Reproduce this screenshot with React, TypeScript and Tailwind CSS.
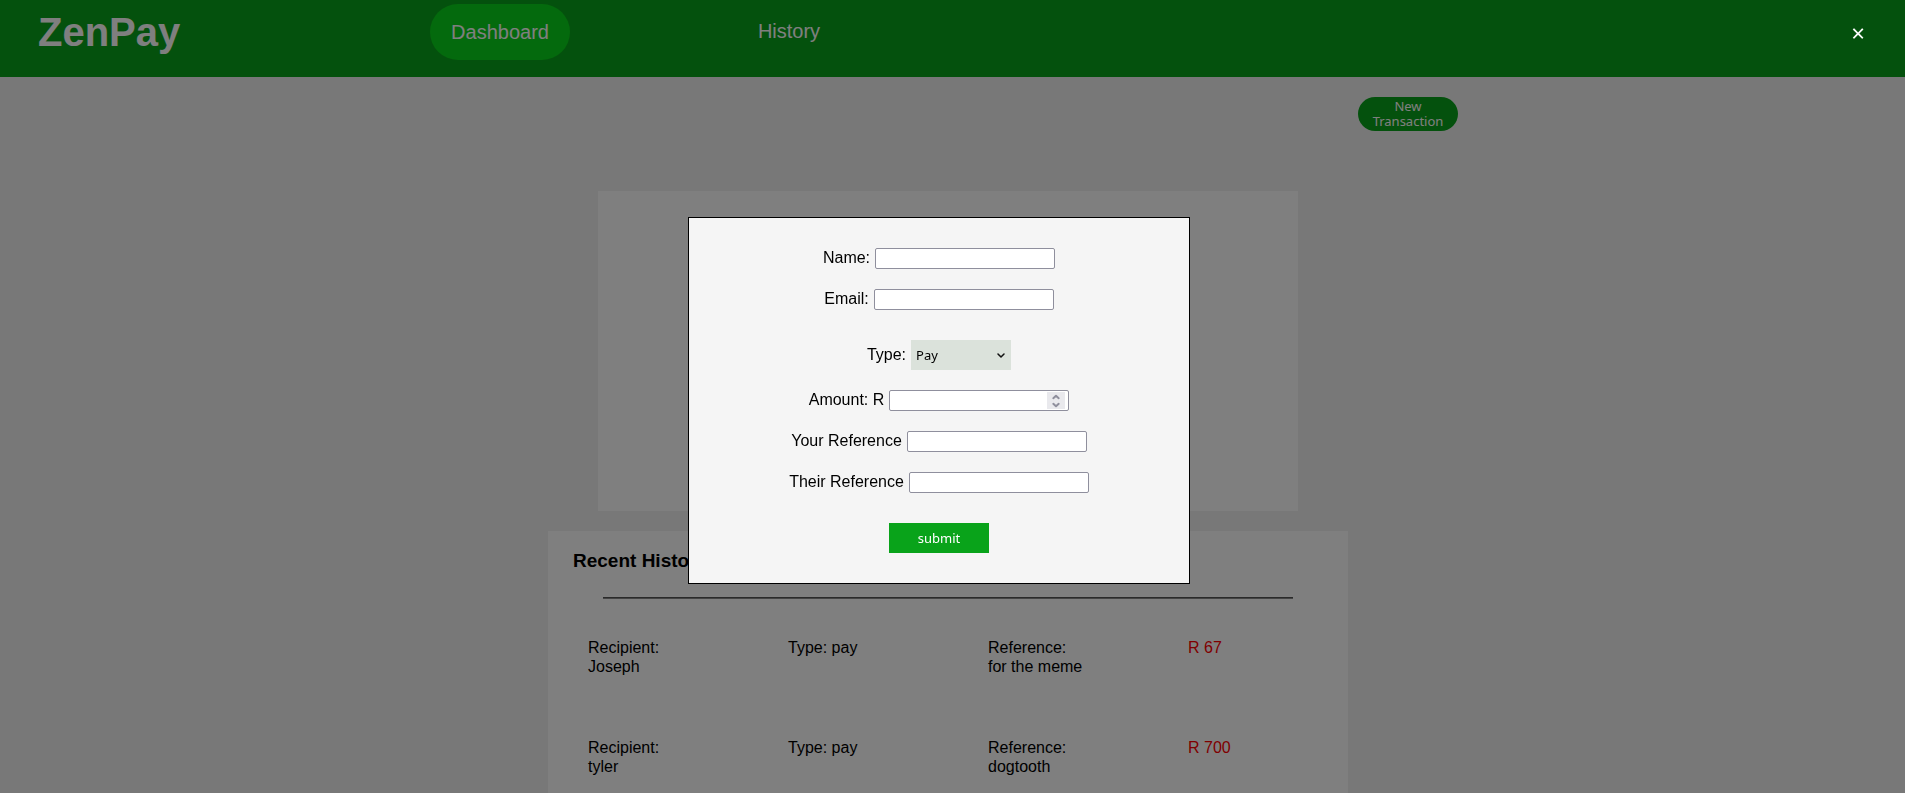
import { useId, useState } from "react";
import type { ReactNode } from "react";

type Transaction = {
  recipient: string;
  type: string;
  reference: string;
  amount: number;
};

const transactions: Transaction[] = [
  { recipient: "Joseph", type: "pay", reference: "for the meme", amount: 67 },
  { recipient: "tyler", type: "pay", reference: "dogtooth", amount: 700 },
];

const fieldClass =
  "h-[21px] w-[180px] rounded-xs border border-[#8f8f9d] bg-white px-1 text-[13px] outline-none";

function Header() {
  return (
    <header className="flex h-[77px] items-start bg-[#09a31a] text-white">
      <h1 className="w-[430px] pt-[9px] pl-[38px] text-[40px] leading-[46px] font-bold">ZenPay</h1>
      <nav className="flex items-start gap-[170px] pt-1 text-[20px] leading-[56px]">
        <a href="#dashboard" className="h-14 w-[140px] rounded-full bg-[#09d41a] text-center">
          Dashboard
        </a>
        <a href="#history" className="-mt-px w-[98px] text-center">
          History
        </a>
      </nav>
    </header>
  );
}

function HistoryRow({ item }: { item: Transaction }) {
  return (
    <li className="grid h-[100px] grid-cols-[repeat(4,200px)] leading-[19px]">
      <p>
        Recipient:
        <br />
        {item.recipient}
      </p>
      <p>Type: {item.type}</p>
      <p>
        Reference:
        <br />
        {item.reference}
      </p>
      <p className="text-[#ff0000]">R {item.amount}</p>
    </li>
  );
}

function Field({
  label,
  type = "text",
  children,
}: {
  label: string;
  type?: string;
  children?: ReactNode;
}) {
  const id = useId();
  return (
    <div className="flex h-[21px] items-center justify-center gap-[5px]">
      <label htmlFor={id} className="pb-[2px] leading-[19px]">
        {label}
      </label>
      <span className="relative flex">
        <input
          id={id}
          type={type}
          className={`${fieldClass} [appearance:textfield] [&::-webkit-inner-spin-button]:appearance-none`}
        />
        {children}
      </span>
    </div>
  );
}

function TransactionDialog({ onClose }: { onClose: () => void }) {
  return (
    <div className="fixed inset-0 flex items-start justify-center bg-black/50 pt-[217px] pr-[27px]">
      <button
        type="button"
        aria-label="Close"
        onClick={onClose}
        className="absolute top-[21px] right-[35px] h-6 w-6 text-center font-['Noto_Sans',sans-serif] text-[24px] leading-6 text-white"
      >
        ×
      </button>
      <form
        role="dialog"
        aria-label="New Transaction"
        onSubmit={(event) => event.preventDefault()}
        className="flex w-[502px] flex-col items-center gap-5 border border-black bg-[#f5f5f5] py-[30px]"
      >
        <Field label="Name:" />
        <Field label="Email:" type="email" />
        <div className="flex items-center gap-[5px] pt-[10px]">
          <label htmlFor="type" className="pb-[2px] leading-[19px]">
            Type:
          </label>
          <span className="relative flex">
            <select
              id="type"
              className="h-[30px] w-[100px] appearance-none bg-[#dbe2db] px-[5px] pt-[2px] font-['Noto_Sans',sans-serif] text-[13px]"
            >
              <option>Pay</option>
              <option>Request</option>
            </select>
            <svg
              aria-hidden="true"
              viewBox="0 0 8 6"
              className="pointer-events-none absolute top-[13px] right-[6px] h-[6px] w-2"
              fill="none"
              stroke="#111"
              strokeWidth="1.5"
              strokeLinecap="round"
              strokeLinejoin="round"
            >
              <path d="M1 1l3 3 3-3" />
            </svg>
          </span>
        </div>
        <Field label="Amount: R" type="number">
          <span className="pointer-events-none absolute top-[2px] right-1 h-[17px] w-[18px] bg-[#e9e9ed]">
            <svg
              aria-hidden="true"
              viewBox="0 0 18 17"
              className="h-full w-full"
              fill="none"
              stroke="#8f8f9d"
              strokeWidth="2"
              strokeLinecap="round"
              strokeLinejoin="round"
            >
              <path d="M6.3 6.2L9 3.8l2.7 2.4M6.3 11.8L9 14.2l2.7-2.4" />
            </svg>
          </span>
        </Field>
        <Field label="Your Reference" />
        <Field label="Their Reference" />
        <button
          type="submit"
          className="mt-[10px] h-[30px] w-[100px] bg-[#09a31a] pt-[2px] font-['Noto_Sans',sans-serif] text-[13px] text-white"
        >
          submit
        </button>
      </form>
    </div>
  );
}

export default function App() {
  const [open, setOpen] = useState(true);
  return (
    <div className="h-screen overflow-hidden bg-[#f0f0f0] font-['Liberation_Sans',Arial,sans-serif] text-[16px] text-black">
      <Header />
      <main className="flex flex-col items-center gap-5 pt-5 pr-[9px]">
        <div className="mb-10 flex w-[1020px] justify-end">
          <button
            type="button"
            onClick={() => setOpen(true)}
            className="h-[34px] w-[100px] rounded-full bg-[#09a31a] px-3 font-['Noto_Sans',sans-serif] text-[13px] leading-[15px] text-white"
          >
            New Transaction
          </button>
        </div>
        <section aria-label="Balance" className="h-80 w-[700px] bg-white" />
        <section className="w-[800px] bg-white px-[25px] pt-5">
          <h2 className="text-[19px] leading-[19px] font-bold">Recent History</h2>
          <hr className="mx-[30px] mt-[27px] h-[2px] border-t border-b border-t-[#555] border-b-[#888]" />
          <ul className="ml-[15px] pt-[39px]">
            {transactions.map((item) => (
              <HistoryRow key={item.recipient} item={item} />
            ))}
          </ul>
        </section>
      </main>
      {open && <TransactionDialog onClose={() => setOpen(false)} />}
    </div>
  );
}
